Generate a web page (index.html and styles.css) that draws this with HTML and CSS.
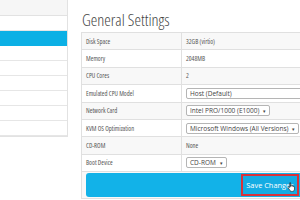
FILE: index.html
```html
<!DOCTYPE html>
<html>
<head>
<meta charset="utf-8">
<link rel="stylesheet" href="styles.css">
</head>
<body>
<div class="page">
  <aside class="sidebar">
    <div class="side-head"></div>
    <ul class="menu">
      <li></li>
      <li class="active"></li>
      <li></li>
      <li></li>
      <li></li>
      <li></li>
      <li></li>
      <li class="long">OS Installation</li>
    </ul>
  </aside>
  <main class="content">
    <h1 class="title">General Settings</h1>
    <table class="settings">
      <tr><td class="label">Disk Space</td><td>32GB (virtio)</td></tr>
      <tr><td class="label">Memory</td><td>2048MB</td></tr>
      <tr><td class="label">CPU Cores</td><td>2</td></tr>
      <tr><td class="label">Emulated CPU Model</td><td><span class="select wide">Host (Default)</span></td></tr>
      <tr><td class="label">Network Card</td><td><span class="select">Intel PRO/1000 (E1000) <span class="caret">▾</span></span></td></tr>
      <tr><td class="label">KVM OS Optimization</td><td><span class="select">Microsoft Windows (All Versions) <span class="caret">▾</span></span></td></tr>
      <tr><td class="label">CD-ROM</td><td>None</td></tr>
      <tr><td class="label">Boot Device</td><td><span class="select">CD-ROM <span class="caret">▾</span></span></td></tr>
      <tr class="action-row"><td colspan="2">
        <div class="actions">
          <button class="save">Save Changes
            <svg class="cursor" viewBox="0 0 16 18" width="9" height="10"><path d="M5 1.5c.8 0 1.3.5 1.3 1.3V8l.6-.1V6.6c0-.7.5-1.1 1.1-1.1s1.1.4 1.1 1.1v1.1c.2-.5.6-.7 1.1-.7.6 0 1.1.4 1.1 1.1v.5c.2-.4.6-.6 1-.6.7 0 1.1.5 1.1 1.2v3.5c0 2.4-1.6 4.3-4 4.3H8.3c-1.3 0-2.3-.6-3-1.6L2.2 10.6c-.4-.6-.3-1.3.2-1.7.5-.4 1.2-.3 1.6.2l.7.9V2.8c0-.8.5-1.3 1.3-1.3z" fill="#fff" stroke="#000" stroke-width="1"/></svg>
          </button>
        </div>
      </td></tr>
    </table>
  </main>
</div>
</body>
</html>
```

FILE: styles.css
```css
* { box-sizing: border-box; }
html, body {
  margin: 0;
  width: 300px;
  height: 200px;
  overflow: hidden;
  background: #fff;
}
body {
  font-family: "Open Sans", "Liberation Sans", sans-serif;
  color: #555;
}
.page {
  display: flex;
  align-items: flex-start;
  margin-left: -60px;
}
.sidebar {
  width: 128px;
  flex-shrink: 0;
  border-right: 1px solid #e2e2e2;
  border-bottom: 1px solid #e2e2e2;
}
.side-head {
  height: 16px;
  background: #f6f6f6;
  border-bottom: 1px solid #e2e2e2;
}
.menu {
  list-style: none;
  margin: 0;
  padding: 0;
}
.menu li {
  height: 15px;
  line-height: 14px;
  border-bottom: 1px solid #e6e6e6;
  font-size: 6px;
  font-stretch: 87.5%;
  white-space: nowrap;
  color: #666;
}
.menu li.active {
  background: #0cb0e5;
  border-bottom-color: #0cb0e5;
}
.menu li.long { padding-left: 29px; }
.content {
  margin-left: 13px;
  padding-top: 10px;
  width: 231px;
  flex-shrink: 0;
}
.title {
  margin: 0 0 2px 1px;
  font-size: 16.5px;
  font-weight: 350;
  font-stretch: 87.5%;
  color: #444;
  line-height: 20px;
}
.settings {
  border-collapse: collapse;
  table-layout: fixed;
  width: 100%;
  font-size: 6.6px;
  font-stretch: 87.5%;
}
.settings td {
  border: 1px solid #e0e0e0;
  height: 17.4px;
  padding: 0 4px;
  white-space: nowrap;
  color: #555;
}
.settings tr:nth-child(odd) td { background: #f8f8f8; }
.settings td.label { width: 100px; }
.select {
  display: inline-block;
  border: 1px solid #b5b5b5;
  border-radius: 2px;
  height: 11px;
  line-height: 9px;
  padding: 0 3px;
  background: #fff;
  font-size: 6.5px;
  font-stretch: 100%;
  color: #444;
}
.select.wide { width: 130px; }
.caret { font-size: 5px; margin-left: 2px; }
.settings .action-row td {
  background: #fff;
  padding: 1px 4px 1px;
  height: auto;
}
.actions {
  background: #12b2e8;
  height: 24px;
  border-radius: 3px;
  display: flex;
  justify-content: flex-end;
  align-items: center;
  padding-right: 8px;
}
.save {
  position: relative;
  height: 22px;
  width: 58px;
  border: 2px solid #d8323a;
  background: #14ace3;
  color: #fff;
  font-family: inherit;
  font-size: 7.4px;
  padding: 0;
}
.cursor {
  position: absolute;
  left: 44px;
  top: 6px;
}
```
